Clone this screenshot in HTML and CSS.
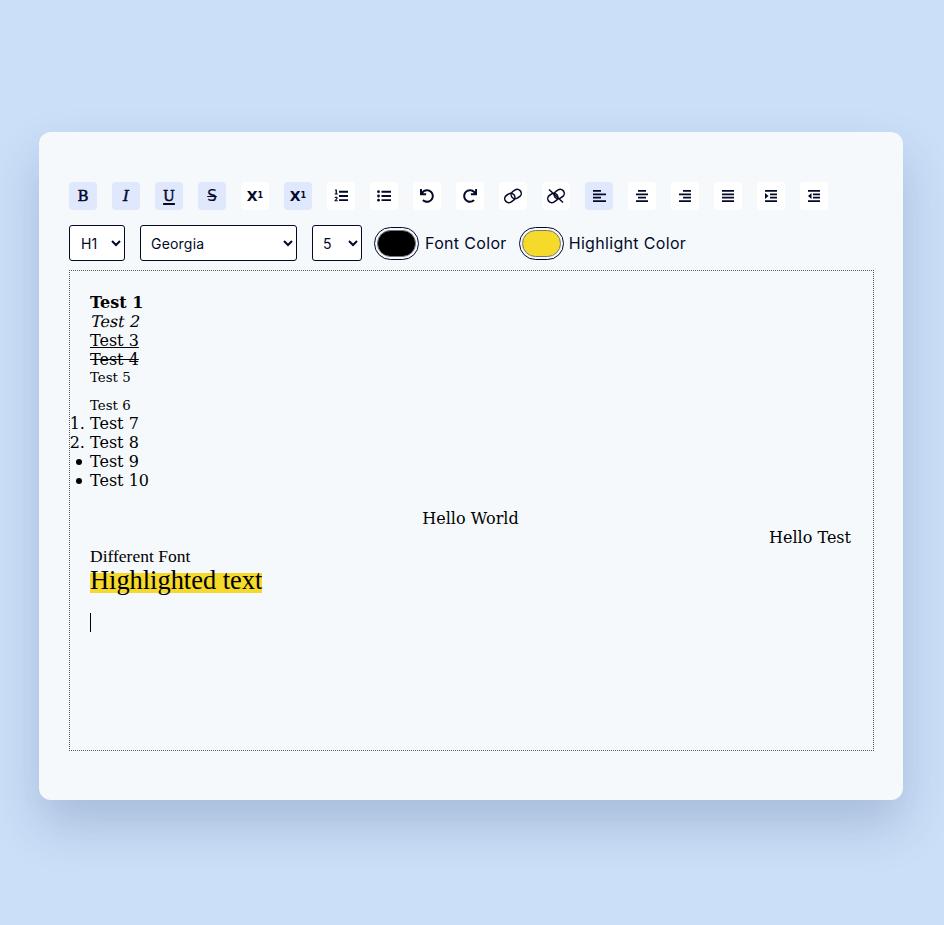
FILE: index.html
```html
<!DOCTYPE html>
<html lang="en">
<head>
<meta charset="utf-8">
<title>Rich Text Editor</title>
<link rel="stylesheet" href="styles.css">
</head>
<body>
<main class="card">
  <div class="toolbar">
    <button class="btn on glyph bold">B</button>
    <button class="btn on glyph ital">I</button>
    <button class="btn on glyph under">U</button>
    <button class="btn on glyph strike"><span>S</span></button>
    <button class="btn glyph scr">X<sup>1</sup></button>
    <button class="btn on glyph scr">X<sub>1</sub></button>
    <button class="btn"><svg viewBox="0 0 14 14" class="ico"><path class="fill" d="M5 1.800h9v1.900H5zM5 6h9v1.900H5zM5 10.200h9v1.900H5z"/><path class="fill" d="M1 .6h1.900v3.800h.9v1H.6v-1h1V1.600H1zM.6 8.200c.9-.6 3-.7 3.100.8 0 1-1 1.500-1.600 2.200h1.700v1.100H.5v-.9c.7-.9 1.900-1.500 1.900-2.100 0-.6-1-.4-1.500 0z"/></svg></button>
    <button class="btn"><svg viewBox="0 0 14 14" class="ico"><path class="fill" d="M4.500 1.800h9.500v1.900H4.500zM4.500 6h9.500v1.900H4.500zM4.500 10.200h9.500v1.900H4.500z"/><circle class="fill" cx="1.500" cy="2.700" r="1.400"/><circle class="fill" cx="1.500" cy="7" r="1.400"/><circle class="fill" cx="1.500" cy="11.200" r="1.400"/></svg></button>
    <button class="btn"><svg viewBox="0 0 512 512" class="ico"><path class="fill" d="M212.333 224.333H12c-6.627 0-12-5.373-12-12V12C0 5.373 5.373 0 12 0h48c6.627 0 12 5.373 12 12v78.112C117.773 39.279 184.26 7.470 258.175 8.007c136.906.994 246.448 111.623 246.157 248.532C504.041 393.258 393.120 504 256.333 504c-64.089 0-122.496-24.313-166.510-64.215-5.099-4.622-5.334-12.554-.467-17.420l33.967-33.967c4.474-4.474 11.662-4.717 16.401-.525C170.760 415.336 211.580 432 256.333 432c97.268 0 176-78.716 176-176 0-97.267-78.716-176-176-176-58.496 0-110.280 28.476-142.274 72.333h98.274c6.627 0 12 5.373 12 12v48c0 6.627-5.373 12-12 12z"/></svg></button>
    <button class="btn"><svg viewBox="0 0 512 512" class="ico"><path class="fill" d="M500.330 0h-47.410a12 12 0 0 0-12 12.570l4 82.760A247.420 247.420 0 0 0 256 8C119.340 8 7.900 119.530 8 256.190 8.100 393.070 119.100 504 256 504a247.100 247.100 0 0 0 166.180-63.910 12 12 0 0 0 .48-17.430l-34-34a12 12 0 0 0-16.380-.55A176 176 0 1 1 402.100 157.800l-101.530-4.870a12 12 0 0 0-12.570 12v47.410a12 12 0 0 0 12 12h200.330a12 12 0 0 0 12-12V12a12 12 0 0 0-12-12z"/></svg></button>
    <button class="btn"><svg viewBox="0 0 18 14" class="link-ico"><g class="chain" transform="rotate(-32 9 7)"><rect x="0" y="3" width="10.500" height="8" rx="4"/><rect x="7.500" y="3" width="10.500" height="8" rx="4"/></g></svg></button>
    <button class="btn"><svg viewBox="0 0 18 14" class="link-ico"><g class="chain" transform="rotate(-32 9 7)"><rect x="0" y="3" width="10.500" height="8" rx="4"/><rect x="7.500" y="3" width="10.500" height="8" rx="4"/></g><path class="chain" d="M2 .5 16 13.500"/></svg></button>
    <button class="btn on"><svg viewBox="0 0 14 14" class="ico"><path class="fill" d="M1 1h8v1.800H1zM1 4.400h13v1.800H1zM1 7.800h8v1.800H1zM1 11.200h13v1.800H1z"/></svg></button>
    <button class="btn"><svg viewBox="0 0 14 14" class="ico"><path class="fill" d="M3 1h8v1.800H3zM1 4.400h12v1.800H1zM3 7.800h8v1.800H3zM1 11.200h12v1.800H1z"/></svg></button>
    <button class="btn"><svg viewBox="0 0 14 14" class="ico"><path class="fill" d="M5 1h8v1.800H5zM1 4.400h12v1.800H1zM5 7.800h8v1.800H5zM1 11.200h12v1.800H1z"/></svg></button>
    <button class="btn"><svg viewBox="0 0 14 14" class="ico"><path class="fill" d="M1 1h12v1.800H1zM1 4.400h12v1.800H1zM1 7.800h12v1.800H1zM1 11.200h12v1.800H1z"/></svg></button>
    <button class="btn"><svg viewBox="0 0 14 14" class="ico"><path class="fill" d="M1 1h12v1.800H1zM6 4.400h7v1.800H6zM6 7.800h7v1.800H6zM1 11.200h12v1.800H1zM1 4l3.500 3L1 10z"/></svg></button>
    <button class="btn"><svg viewBox="0 0 14 14" class="ico"><path class="fill" d="M1 1h12v1.800H1zM6 4.400h7v1.800H6zM6 7.800h7v1.800H6zM1 11.200h12v1.800H1zM4.500 4L1 7l3.500 3z"/></svg></button>
  </div>
  <div class="controls">
    <select class="sel sel-head"><option>H1</option></select>
    <select class="sel sel-font"><option>Georgia</option></select>
    <select class="sel sel-size"><option>5</option></select>
    <label class="color"><input type="color" value="#000000"><span>Font Color</span></label>
    <label class="color"><input type="color" value="#f5d92b"><span>Highlight Color</span></label>
  </div>
  <div class="editor">
    <div class="ln"><b>Test 1</b></div>
    <div class="ln"><i class="slant">Test 2</i></div>
    <div class="ln"><u>Test 3</u></div>
    <div class="ln"><s>Test 4</s></div>
    <div class="small gap">Test 5</div>
    <div class="small">Test 6</div>
    <ol class="list first"><li>Test 7</li><li>Test 8</li></ol>
    <ul class="list bullets"><li>Test 9</li><li>Test 10</li></ul>
    <div class="ln blank"></div>
    <div class="ln center">Hello World</div>
    <div class="ln right">Hello Test</div>
    <div class="diff">Different Font</div>
    <div class="big"><mark>Highlighted text</mark></div>
    <div class="caretline"><span class="caret"></span></div>
  </div>
</main>
</body>
</html>
```
FILE: styles.css
```css
* { box-sizing: border-box; }
html, body { margin: 0; }
body {
  height: 925px;
  background: #cbdff8;
  padding: 132px 0 0 39px;
  overflow: hidden;
  font-family: "Inter", "Noto Sans", sans-serif;
}
.card {
  width: 864px;
  height: 668px;
  background: #f5f9fc;
  border-radius: 12px;
  padding: 50px 29px 0 30px;
  box-shadow: 0 25px 50px rgba(20, 50, 100, 0.2);
}
.toolbar { display: flex; gap: 15px; height: 28px; }
.btn {
  width: 28px;
  height: 28px;
  padding: 0;
  border: 0;
  border-radius: 4px;
  background: #fff;
  color: #020929;
  display: flex;
  align-items: center;
  justify-content: center;
}
.btn.on { background: #e0e8fe; }
.ico { width: 14px; height: 14px; display: block; overflow: visible; }
.link-ico { width: 18px; height: 14px; display: block; overflow: visible; }
.fill { fill: #020929; }
.chain { fill: none; stroke: #020929; stroke-width: 1.5; }
.glyph { font-family: "DejaVu Serif", serif; font-size: 15px; font-weight: 400; -webkit-text-stroke: 0.5px #020929; }
.glyph.ital { font-style: italic; font-size: 15px; }
.glyph.under { text-decoration: underline; text-decoration-thickness: 2px; text-underline-offset: 2px; font-size: 14px; }
.glyph.strike { font-family: "DejaVu Sans", sans-serif; text-decoration: line-through; -webkit-text-stroke: 0.2px #020929; }
.glyph.strike span { padding: 0 2px; }
.scr { font-family: "DejaVu Sans", sans-serif; font-size: 14px; font-weight: 700; -webkit-text-stroke: 0; }
.scr sup, .scr sub { font-size: 8px; line-height: 0; }
.controls { display: flex; align-items: center; height: 36px; margin-top: 15px; }
.sel {
  height: 36px;
  background: #fff;
  border: 1px solid #020929;
  border-radius: 3px;
  font-family: "Inter", sans-serif;
  font-size: 14px;
  letter-spacing: 0.2px;
  color: #020929;
  padding: 0 5px 0 6px;
}
.sel-head { width: 56px; padding-left: 7px; }
.sel-font { width: 157px; margin-left: 15px; }
.sel-size { width: 50px; margin-left: 15px; }
.color { display: flex; align-items: center; margin-left: 12px; font-size: 16px; letter-spacing: 0.33px; color: #020929; gap: 5px; }
.sel-size + .color { gap: 6px; }
.color input {
  width: 45px;
  height: 33px;
  padding: 2px;
  background: #f5f9fc;
  border: 1px solid #020929;
  border-radius: 17px;
}
.color input::-webkit-color-swatch-wrapper { padding: 0; }
.color input::-webkit-color-swatch { border: 1px solid #777; border-radius: 14px; }
.editor {
  height: 481px;
  margin-top: 9px;
  border: 1px dotted #555;
  padding: 22px 22px 0 20px;
  font-family: "DejaVu Serif", serif;
  font-size: 16px;
  line-height: 19px;
  color: #000;
}
.slant { display: inline-block; font-style: normal; transform: skewX(-12deg); transform-origin: 0 79%; }
.small { font-size: 13.33px; line-height: 18px; }
.gap { margin-bottom: 10px; }
.list { margin: 0; padding: 0; }
.list.first { margin-top: -1px; }
.bullets { list-style: none; }
.bullets li::before {
  content: "";
  display: inline-block;
  width: 6px;
  height: 6px;
  margin: 0 8px 0 -14px;
  border-radius: 50%;
  background: #000;
  vertical-align: 2px;
}
.blank { height: 19px; }
.center { text-align: center; }
.right { text-align: right; }
.diff { font-family: "Liberation Serif", serif; font-size: 17.5px; line-height: 19px; }
.big { font-family: "Liberation Serif", serif; font-size: 26.4px; line-height: 28px; height: 28px; }
mark { display: inline-block; height: 20px; line-height: 15px; background: #f5d92b; color: #000; }
.caretline { height: 19px; margin-top: 19px; display: flex; }
.caret { width: 1px; height: 19px; background: #000; }
```
